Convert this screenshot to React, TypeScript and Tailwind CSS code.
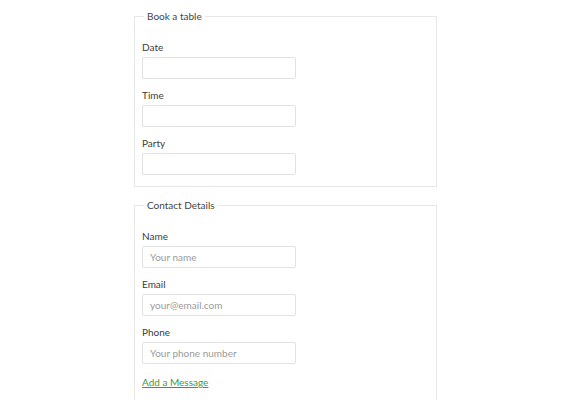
import React from "react";

function Field({ label, placeholder }: { label: string; placeholder?: string }) {
  return (
    <div className="flex flex-col">
      <label className="block text-[10px] leading-[14px] text-[#3c3c3c] mb-[3px]">{label}</label>
      <input
        type="text"
        placeholder={placeholder}
        className="w-[154px] h-[22px] border border-[#e2e2e2] rounded-[2px] px-[7px] text-[10px] text-[#333] placeholder:text-[#9a9a9a] outline-none bg-white"
      />
    </div>
  );
}

export default function App() {
  return (
    <div className="w-[580px] h-[400px] overflow-hidden bg-white" style={{ fontFamily: "Lato, 'Noto Sans', sans-serif" }}>
      <fieldset className="ml-[134px] mt-[10px] w-[303px] border border-[#e8e8e8] px-[7px] pt-[17px] pb-[11px]">
        <legend className="ml-[2px] px-[3px] text-[10px] leading-[13px] text-[#444444]">Book a table</legend>
        <div className="flex flex-col gap-[9px]">
          <Field label="Date" />
          <Field label="Time" />
          <Field label="Party" />
        </div>
      </fieldset>
      <fieldset className="ml-[134px] mt-[12px] w-[303px] border border-[#e8e8e8] px-[7px] pt-[17px] pb-[24px]">
        <legend className="ml-[2px] px-[3px] text-[10px] leading-[13px] text-[#444444]">Contact Details</legend>
        <div className="flex flex-col gap-[9px]">
          <Field label="Name" placeholder="Your name" />
          <Field label="Email" placeholder="your@email.com" />
          <Field label="Phone" placeholder="Your phone number" />
          <a href="#" className="block mt-[2px] text-[10px] leading-[14px] text-[#3e9a34] underline">Add a Message</a>
        </div>
      </fieldset>
    </div>
  );
}
